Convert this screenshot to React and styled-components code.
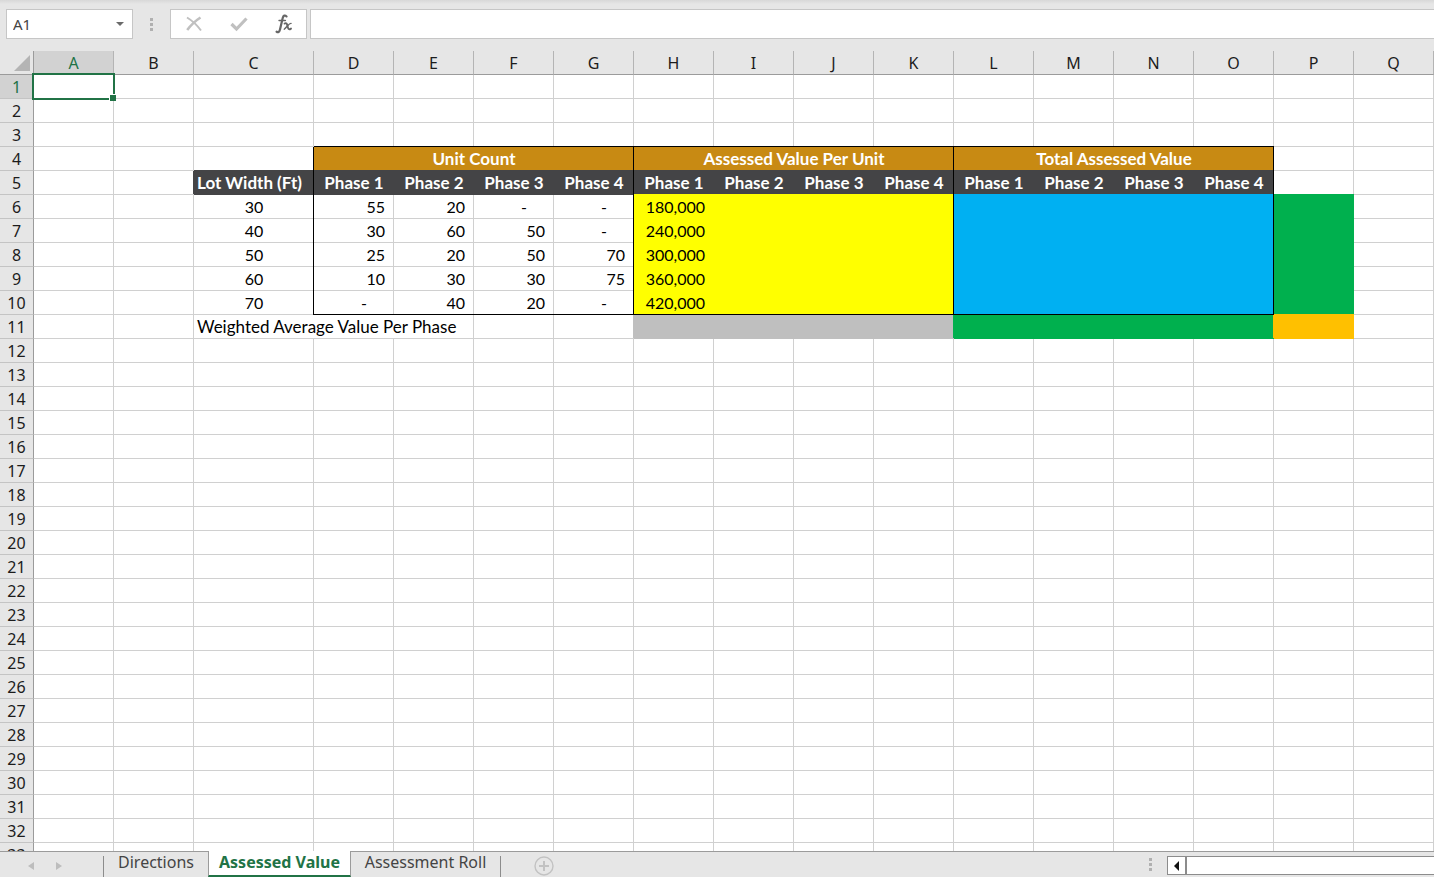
import React from 'react';
import styled, { createGlobalStyle, css } from 'styled-components';

const GlobalStyle = createGlobalStyle`
  *, *::before, *::after { box-sizing: border-box; }
  body { margin: 0; background: #e6e6e6; }
  button, input { font: inherit; color: inherit; margin: 0; padding: 0; border: 0; background: none; border-radius: 0; outline: 0; }
`;

const UI = '"Noto Sans", "Open Sans", sans-serif';
const BODY = 'Lato, "Open Sans", sans-serif';
const GRID = '#d0d0d0';
const RULE = '#9b9b9b';
const GREEN = '#217346';
const BLACK = '#000';

const FILLS = {
  gold: '#c88a13',
  dark: '#444446',
  yellow: '#ffff00',
  blue: '#00b0f2',
  green: '#00b04e',
  grey: '#bfbfbf',
  orange: '#ffc000',
};

const Window = styled.div`
  display: flex;
  flex-direction: column;
  height: 100vh;
  overflow: hidden;
  background: #e6e6e6;
  font-family: ${UI};
  font-size: 16px;
  color: #262626;
`;

const FormulaBar = styled.header`
  display: flex;
  flex: none;
  height: 51px;
  padding: 9px 0 12px 6px;
  background: linear-gradient(#d8d8d8, #e6e6e6 4px);
`;

const NameBox = styled.div`
  display: flex;
  align-items: center;
  width: 127px;
  border: 1px solid #c6c6c6;
  background: #fff;
`;

const NameInput = styled.input`
  flex: 1;
  min-width: 0;
  height: 28px;
  padding-left: 6px;
  font-size: 15px;
  color: #444;
`;

const IconButton = styled.button`
  display: flex;
  align-items: center;
  justify-content: center;
  flex: none;
  width: ${(p) => p.$width}px;
  height: ${(p) => p.$height || 28}px;
`;

const Grip = styled.div`
  display: flex;
  flex-direction: column;
  align-items: center;
  justify-content: center;
  gap: 2px;
  width: ${(p) => p.$width}px;

  i {
    width: 3px;
    height: 3px;
    background: #b0b0b0;
  }
`;

const Actions = styled.div`
  display: flex;
  width: 137px;
  margin-right: 3px;
  border: 1px solid #c6c6c6;
  background: #fff;
`;

const FormulaInput = styled.input`
  flex: 1;
  min-width: 0;
  padding: 0 6px;
  border: 1px solid #c6c6c6;
  border-right: 0;
  background: #fff;
`;

const Sheet = styled.main`
  flex: 1;
  min-height: 0;
  overflow: hidden;
  background: #fff;
`;

const Grid = styled.table`
  width: 100%;
  table-layout: fixed;
  border-collapse: separate;
  border-spacing: 0;
`;

const Col = styled.col`
  width: ${(p) => (p.$width ? `${p.$width}px` : 'auto')};
`;

const header = css`
  height: 24px;
  padding: 2px 0 0;
  font-weight: 400;
  line-height: 21px;
  text-align: center;
  color: ${(p) => (p.$active ? GREEN : '#1c1c1c')};
  background: ${(p) => (p.$active ? '#d2d2d2' : '#e6e6e6')};
`;

const ColumnHeader = styled.th`
  ${header}
  border-right: 1px solid #b4b4b4;
  border-bottom: 1px solid ${RULE};
`;

const RowHeader = styled.th`
  ${header}
  border-right: 1px solid ${RULE};
  border-bottom: 1px solid #c4c4c4;
`;

const Corner = styled.td`
  height: 24px;
  padding: 0 3px 3px 0;
  line-height: 0;
  text-align: right;
  vertical-align: bottom;
  background: #e6e6e6;
  border-right: 1px solid ${RULE};
  border-bottom: 1px solid ${RULE};
`;

// Edges are inset shadows so that a black rule always runs unbroken through the corner.
const edges = ({ $right, $bottom }) => {
  const right = `inset -1px 0 ${$right}`;
  const bottom = `inset 0 -1px ${$bottom}`;
  return $right === BLACK ? `${right}, ${bottom}` : `${bottom}, ${right}`;
};

const Cell = styled.td`
  position: relative;
  height: 24px;
  padding: 0 ${(p) => p.$padRight}px 1px ${(p) => p.$padLeft}px;
  font-family: ${BODY};
  font-size: ${(p) => (p.$label ? 17 : 16)}px;
  font-weight: ${(p) => (p.$bold ? 700 : 400)};
  line-height: 23px;
  text-align: ${(p) => p.$align};
  white-space: nowrap;
  color: ${(p) => (p.$bold ? '#fff' : '#000')};
  background: ${(p) => p.$fill || '#fff'};
  box-shadow: ${edges};
`;

const Selection = styled.span`
  position: absolute;
  z-index: 1;
  inset: -2px -1px -1px -2px;
  border: 2px solid ${GREEN};

  &::after {
    content: '';
    position: absolute;
    right: -3px;
    bottom: -3px;
    width: 6px;
    height: 6px;
    background: ${GREEN};
    box-shadow: -1px -1px #fff;
  }
`;

const TabBar = styled.footer`
  display: flex;
  flex: none;
  height: 26px;
  border-top: 1px solid ${RULE};
`;

const SheetNav = styled.div`
  display: flex;
  align-items: center;
  justify-content: center;
  width: 103px;
  padding-top: 3px;
  padding-right: 13px;
`;

const Divider = styled.span`
  width: 1px;
  margin: 4px 0 0;
  background: #8c8c8c;
`;

const Tab = styled.button`
  flex: none;
  width: ${(p) => p.$width}px;
  height: 25px;
  padding-bottom: 5px;
  line-height: 20px;
  white-space: nowrap;
  color: #444;

  ${(p) =>
    p.$active &&
    css`
      height: 26px;
      margin-top: -1px;
      padding-bottom: 2px;
      font-weight: 700;
      color: ${GREEN};
      background: #fff;
      border-left: 1px solid ${RULE};
      border-right: 1px solid ${RULE};
      border-bottom: 2px solid ${GREEN};
    `}
`;

const Spacer = styled.div`
  flex: 1;
`;

const ScrollBar = styled.div`
  display: flex;
  flex: 0 0 267px;
  height: 19px;
  margin-top: 4px;
  background: #fff;
  border: 1px solid #8c8c8c;
  border-right: 0;
`;

const Thumb = styled.div`
  flex: 1;
  border-left: 2px solid #8c8c8c;
`;

const LETTERS = 'ABCDEFGHIJKLMNOPQ'.split('');
const ROW_COUNT = 33;
const PHASES = ['Phase 1', 'Phase 2', 'Phase 3', 'Phase 4'];
const GROUPS = { D: 'Unit Count', H: 'Assessed Value Per Unit', L: 'Total Assessed Value' };
const LOTS = [
  ['30', '55', '20', '-', '-', '180,000'],
  ['40', '30', '60', '50', '-', '240,000'],
  ['50', '25', '20', '50', '70', '300,000'],
  ['60', '10', '30', '30', '75', '360,000'],
  ['70', '-', '40', '20', '-', '420,000'],
];

// Columns are numbered from A = 0, rows from 1.
function fillAt(row, col) {
  if (row === 4 && col >= 3 && col <= 14) return FILLS.gold;
  if (row === 5 && col >= 2 && col <= 14) return FILLS.dark;
  if (row >= 6 && row <= 10) {
    if (col >= 7 && col <= 10) return FILLS.yellow;
    if (col >= 11 && col <= 14) return FILLS.blue;
    if (col === 15) return FILLS.green;
  }
  if (row === 11) {
    if (col >= 7 && col <= 10) return FILLS.grey;
    if (col >= 11 && col <= 14) return FILLS.green;
    if (col === 15) return FILLS.orange;
  }
  return null;
}

function textAt(row, col) {
  if (row === 5 && col === 2) return 'Lot Width (Ft)';
  if (row === 5 && col >= 3 && col <= 14) return PHASES[(col - 3) % 4];
  if (row >= 6 && row <= 10 && col >= 2 && col <= 7) return LOTS[row - 6][col - 2];
  return '';
}

function rightEdge(row, col) {
  if (row >= 4 && row <= 10 && [2, 6, 10, 14].includes(col)) return BLACK;
  return fillAt(row, col + 1) || fillAt(row, col) || GRID;
}

function bottomEdge(row, col) {
  if ((row === 3 || row === 10) && col >= 3 && col <= 14) return BLACK;
  return fillAt(row + 1, col) || fillAt(row, col) || GRID;
}

function layoutOf(row, col, text) {
  if (row === 5) return col === 2 ? ['left', 3, 0] : ['center', 2, 2];
  if (col === 2) return ['center', 2, 2];
  if (text === '-') return ['right', 0, 27];
  return ['right', 0, 9];
}

function DataCell({ row, col }) {
  const common = { $fill: fillAt(row, col), $bottom: bottomEdge(row, col) };
  if (row === 4 && GROUPS[LETTERS[col]]) {
    return (
      <Cell {...common} colSpan={4} $bold $label $align="center" $padLeft={2} $padRight={2} $right={BLACK}>
        {GROUPS[LETTERS[col]]}
      </Cell>
    );
  }
  if (row === 4 && col > 3 && col <= 14) return null;
  if (row === 11 && col === 2) {
    return (
      <Cell {...common} colSpan={3} $label $align="left" $padLeft={3} $padRight={0} $right={GRID}>
        Weighted Average Value Per Phase
      </Cell>
    );
  }
  if (row === 11 && (col === 3 || col === 4)) return null;
  const text = textAt(row, col);
  const [align, left, right] = layoutOf(row, col, text);
  const isHeading = row === 5;
  return (
    <Cell
      {...common}
      $bold={isHeading}
      $label={isHeading}
      $align={align}
      $padLeft={left}
      $padRight={right}
      $right={rightEdge(row, col)}
    >
      {text}
      {row === 1 && col === 0 && <Selection />}
    </Cell>
  );
}

function Dots({ width }) {
  return (
    <Grip $width={width}>
      <i />
      <i />
      <i />
    </Grip>
  );
}

function Triangle({ d, width, height, fill }) {
  return (
    <svg width={width} height={height} viewBox={`0 0 ${width} ${height}`} aria-hidden="true">
      <path d={d} fill={fill} />
    </svg>
  );
}

export default function App() {
  return (
    <Window>
      <GlobalStyle />
      <FormulaBar>
        <NameBox>
          <NameInput aria-label="Name box" defaultValue="A1" />
          <IconButton $width={24} aria-label="Show names">
            <Triangle width={8} height={4} d="M0 0H8L4 4Z" fill="#6a6a6a" />
          </IconButton>
        </NameBox>
        <Dots width={37} />
        <Actions>
          <IconButton $width={45} aria-label="Cancel">
            <svg width="18" height="16" viewBox="0 0 18 16" fill="none" stroke="#c0c0c0">
              <path d="M2 1.500C7 4.500 12 9 16 14.500" strokeWidth="2" />
              <path d="M15.500 1.500C10 5 6 9 2.200 14" strokeWidth="2.600" />
            </svg>
          </IconButton>
          <IconButton $width={45} aria-label="Enter">
            <svg width="18" height="16" viewBox="0 0 18 16" fill="none" stroke="#c0c0c0">
              <path d="M1.500 8L6.500 13L16.500 2.500" strokeWidth="3.200" />
            </svg>
          </IconButton>
          <IconButton $width={45} aria-label="Insert function">
            <svg width="18" height="20" viewBox="0 0 18 20" fill="none" stroke="#666" strokeLinecap="round">
              <path d="M11.500 2.400C10 .8 8.400 1.400 7.700 4L5 15.500C4.400 18 3 18.800 1.600 17.600" strokeWidth="2.200" />
              <path d="M4 6.500H10.400" strokeWidth="1.400" />
              <path d="M9.600 9.600C11.600 8.200 12 10 12.600 12.400C13.200 15.200 14 16 16 14.600" strokeWidth="1.900" />
              <path d="M16 9.400C14 9.200 12.200 13 9.200 15.200" strokeWidth="1.400" />
            </svg>
          </IconButton>
        </Actions>
        <FormulaInput aria-label="Formula" />
      </FormulaBar>

      <Sheet>
        <Grid>
          <colgroup>
            <Col $width={34} />
            {LETTERS.map((letter) => (
              <Col key={letter} $width={letter === 'C' ? 120 : letter === 'Q' ? 0 : 80} />
            ))}
          </colgroup>
          <thead>
            <tr>
              <Corner>
                <Triangle width={16} height={16} d="M16 0V16H0Z" fill="#b4b4b4" />
              </Corner>
              {LETTERS.map((letter) => (
                <ColumnHeader key={letter} scope="col" $active={letter === 'A'}>
                  {letter}
                </ColumnHeader>
              ))}
            </tr>
          </thead>
          <tbody>
            {Array.from({ length: ROW_COUNT }, (_, i) => i + 1).map((row) => (
              <tr key={row}>
                <RowHeader scope="row" $active={row === 1}>
                  {row}
                </RowHeader>
                {LETTERS.map((letter, col) => (
                  <DataCell key={letter} row={row} col={col} />
                ))}
              </tr>
            ))}
          </tbody>
        </Grid>
      </Sheet>

      <TabBar>
        <SheetNav>
          <IconButton $width={28} $height={20} aria-label="Previous sheet">
            <Triangle width={6} height={8} d="M6 0V8L0 4Z" fill="#bdbdbd" />
          </IconButton>
          <IconButton $width={28} $height={20} aria-label="Next sheet">
            <Triangle width={6} height={8} d="M0 0V8L6 4Z" fill="#bdbdbd" />
          </IconButton>
        </SheetNav>
        <Divider />
        <Tab $width={104}>Directions</Tab>
        <Tab $width={143} $active>
          Assessed Value
        </Tab>
        <Tab $width={149}>Assessment Roll</Tab>
        <Divider />
        <IconButton $width={86} $height={28} aria-label="New sheet">
          <svg width="20" height="20" viewBox="0 0 20 20" fill="none" stroke="#c2c2c2">
            <circle cx="10" cy="10" r="9" strokeWidth="1.400" />
            <path d="M10 5V15M5 10H15" strokeWidth="2" />
          </svg>
        </IconButton>
        <Spacer />
        <Dots width={33} />
        <ScrollBar>
          <IconButton $width={17} $height={17} aria-label="Scroll left">
            <Triangle width={5} height={10} d="M5 0V10L0 5Z" fill="#111" />
          </IconButton>
          <Thumb />
        </ScrollBar>
      </TabBar>
    </Window>
  );
}
